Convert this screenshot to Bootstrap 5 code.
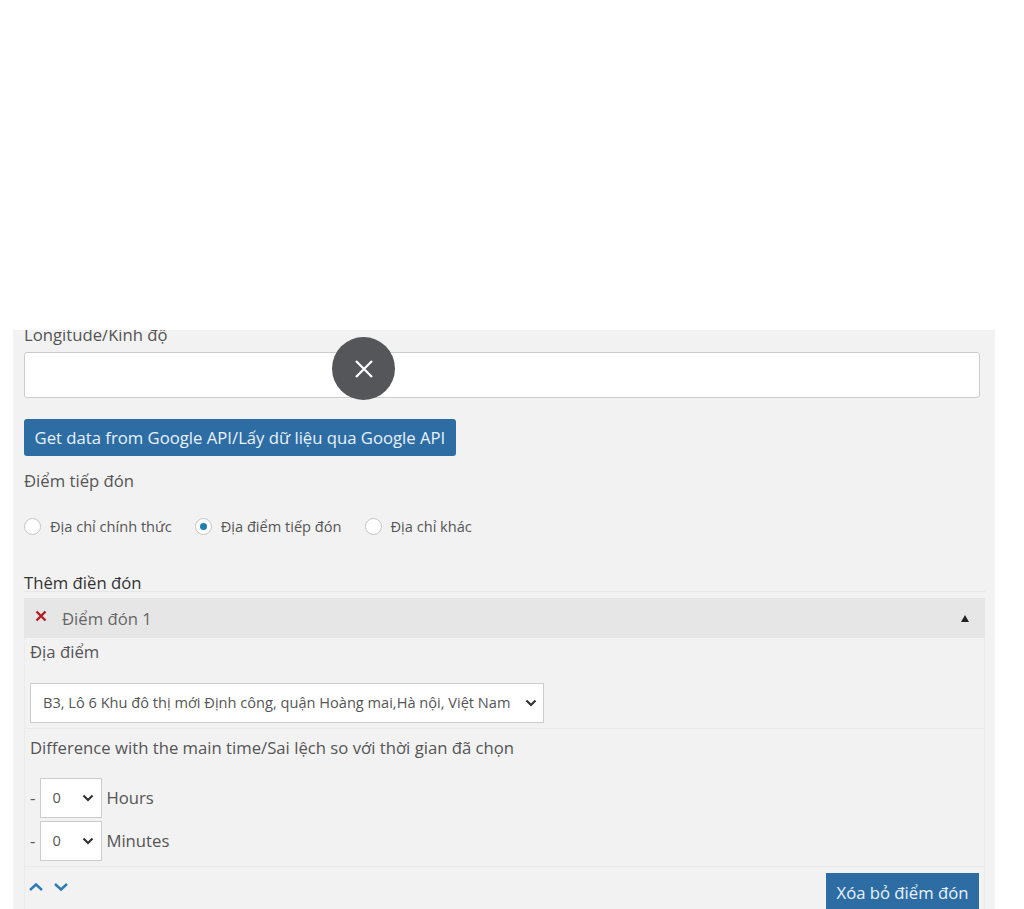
<!DOCTYPE html>
<html lang="vi">
<head>
  <meta charset="UTF-8">
  <meta name="viewport" content="width=device-width, initial-scale=1.0">
  <title>Điểm tiếp đón</title>
  <link href="https://cdn.jsdelivr.net/npm/bootstrap@5.3.0/dist/css/bootstrap.min.css" rel="stylesheet">
  <style>
    html, body { height: 909px; overflow: hidden; }
    body {
      font-family: "Open Sans", "Noto Sans", sans-serif;
      font-size: 16.7px;
      color: #555;
      background: #fff;
    }
    .page-wrap { padding: 330px 29px 0 13px; height: 909px; }
    .panel-box {
      background: #f2f2f2;
      height: 579px;
      padding-left: 11px;
      padding-right: 11px;
      overflow: hidden;
    }
    .lbl { display: block; line-height: 22px; margin: 0; }
    .lng-lbl { margin-top: -6px; margin-bottom: 6px; }
    .lng-input {
      display: block;
      width: 956px;
      height: 46px;
      border: 1px solid #ccc;
      border-radius: 3px;
      background: #fff;
      margin-bottom: 21px;
    }
    .btn-api, .btn-del {
      background: #2e6da4;
      color: #e8f2fa;
      font-size: 16.7px;
      border: 0;
    }
    .btn-api {
      height: 37px;
      padding: 0 10.5px;
      border-radius: 3px;
      line-height: 37px;
      display: block;
      margin-bottom: 14px;
    }
    .radio-row { margin-top: 24px; gap: 23px; font-size: 14.6px; height: 22px; }
    .radio-item { gap: 9px; }
    .radio-dot {
      width: 17px;
      height: 17px;
      border: 1px solid #c4c4c4;
      border-radius: 50%;
      background: #fff;
      display: flex;
      align-items: center;
      justify-content: center;
    }
    .radio-dot.on::after {
      content: "";
      width: 7px;
      height: 7px;
      border-radius: 50%;
      background: #1f7fb0;
    }
    .add-title { color: #333; margin-top: 35px; line-height: 20px; border-bottom: 1px solid #e6e6e6; width: 961px; height: 19px; }
    .pick-box { width: 961px; margin-top: 6px; border-right: 1px solid #ebebeb; border-left: 1px solid #ebebeb; }
    .pick-head { height: 40px; background: #e6e6e6; padding: 0 16px 0 11px; margin-left: -1px; margin-right: -1px; }
    .pick-x { margin-top: -4px; }
    .pick-name { margin-left: 15px; color: #666; margin-top: 2px; }
    .pick-tri { width: 0; height: 0; border-left: 4.5px solid transparent; border-right: 4.5px solid transparent; border-bottom: 7px solid #222; }
    .pick-sec { padding: 3px 5px 0; border-bottom: 1px solid #e8e8e8; }
    .sec-place { height: 91px; }
    .place-select, .num-select {
      font-family: inherit;
      color: #555;
      background-color: #fff;
      background-image: url("data:image/svg+xml,%3csvg xmlns='http://www.w3.org/2000/svg' viewBox='0 0 12 8'%3e%3cpath fill='none' stroke='%23333' stroke-width='2.2' d='M1.5 1.5L6 6L10.5 1.5'/%3e%3c/svg%3e");
      background-size: 12px 8px;
      border-radius: 0;
      border: 1px solid #ccc;
      height: 40px;
      padding-top: 0;
      padding-bottom: 0;
    }
    .place-select {
      width: 514px;
      font-size: 14.6px;
      margin-top: 20px;
      padding-left: 12px;
      padding-right: 28px;
      background-position: right 6px center;
    }
    .sec-diff { height: 138px; padding-top: 8px; }
    .num-row { height: 40px; margin-bottom: 3px; gap: 4px; }
    .dash-mark { margin-right: 1px; }
    .num-select { width: 62px; font-size: 14.6px; padding-left: 11px; padding-right: 0; background-position: right 7px center; }
    .time-rows { margin-top: 19px; }
    .sec-foot { padding: 6px 5px 0 3px; }
    .arrows { gap: 9px; margin-top: 9px; }
    .btn-del { height: 40px; width: 153px; padding: 0; line-height: 38px; border-radius: 0; }
    .close-dot {
      position: absolute;
      left: 332px;
      top: 337px;
      width: 63px;
      height: 63px;
      border-radius: 50%;
      background: #54565a;
      display: flex;
      align-items: center;
      justify-content: center;
    }
  </style>
</head>
<body>
  <div class="page-wrap">
    <div class="panel-box">
      <label class="lbl lng-lbl">Longitude/Kinh độ</label>
      <input type="text" class="lng-input">
      <button type="button" class="btn btn-api">Get data from Google API/Lấy dữ liệu qua Google API</button>
      <div class="lbl">Điểm tiếp đón</div>
      <div class="d-flex align-items-center radio-row">
        <div class="d-flex align-items-center radio-item"><span class="radio-dot"></span><span>Địa chỉ chính thức</span></div>
        <div class="d-flex align-items-center radio-item"><span class="radio-dot on"></span><span>Địa điểm tiếp đón</span></div>
        <div class="d-flex align-items-center radio-item"><span class="radio-dot"></span><span>Địa chỉ khác</span></div>
      </div>
      <div class="add-title">Thêm điền đón</div>
      <div class="pick-box">
        <div class="d-flex align-items-center justify-content-between pick-head">
          <div class="d-flex align-items-center">
            <svg class="pick-x" width="12" height="12" viewBox="0 0 12 12"><path d="M1.5 1.5L10.5 10.5M10.5 1.5L1.5 10.5" stroke="#b01c22" stroke-width="2.4" fill="none"/></svg>
            <span class="pick-name">Điểm đón 1</span>
          </div>
          <span class="pick-tri"></span>
        </div>
        <div class="pick-sec sec-place">
          <div class="lbl">Địa điểm</div>
          <select class="form-select place-select">
            <option>B3, Lô 6 Khu đô thị mới Định công, quận Hoàng mai,Hà nội, Việt Nam</option>
          </select>
        </div>
        <div class="pick-sec sec-diff">
          <div class="lbl">Difference with the main time/Sai lệch so với thời gian đã chọn</div>
          <div class="time-rows">
            <div class="d-flex align-items-center num-row"><span class="dash-mark">-</span><select class="form-select num-select"><option>0</option></select><span>Hours</span></div>
            <div class="d-flex align-items-center num-row"><span class="dash-mark">-</span><select class="form-select num-select"><option>0</option></select><span>Minutes</span></div>
          </div>
        </div>
        <div class="d-flex justify-content-between align-items-start sec-foot">
          <div class="d-flex arrows">
            <svg width="16" height="10" viewBox="0 0 16 10"><path d="M2 8L8 2.5L14 8" stroke="#2e7ab8" stroke-width="2.4" fill="none"/></svg>
            <svg width="16" height="10" viewBox="0 0 16 10"><path d="M2 2L8 7.5L14 2" stroke="#2e7ab8" stroke-width="2.4" fill="none"/></svg>
          </div>
          <button type="button" class="btn btn-del">Xóa bỏ điểm đón</button>
        </div>
      </div>
    </div>
  </div>
  <div class="close-dot">
    <svg width="20" height="20" viewBox="0 0 20 20"><path d="M2 2L18 18M18 2L2 18" stroke="#fff" stroke-width="2.2" fill="none"/></svg>
  </div>
  <script src="https://cdn.jsdelivr.net/npm/bootstrap@5.3.0/dist/js/bootstrap.bundle.min.js"></script>
</body>
</html>
